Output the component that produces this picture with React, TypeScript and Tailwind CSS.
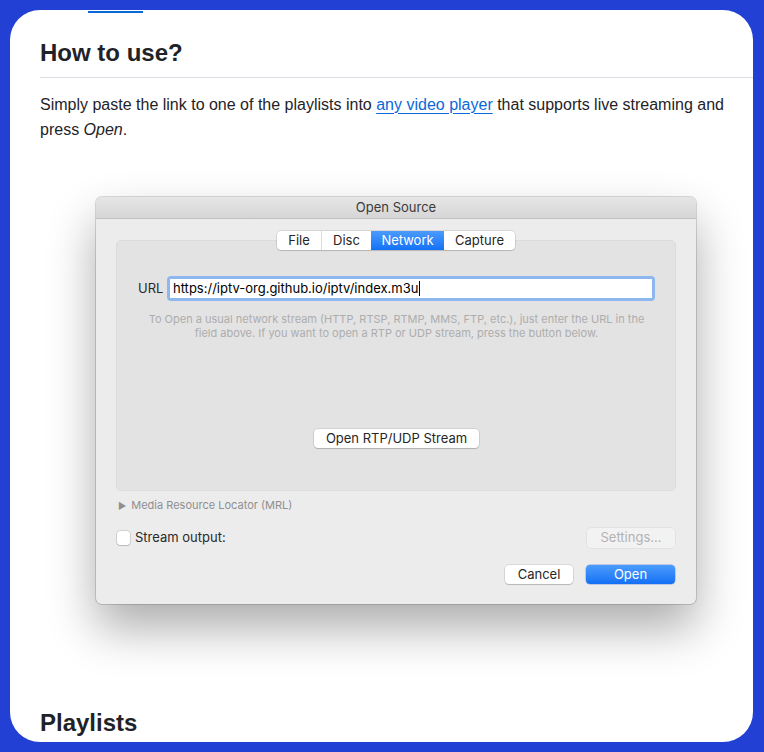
import React from "react";

const mac = { fontFamily: "Inter, 'Noto Sans', sans-serif" } as React.CSSProperties;

function Dialog() {
  return (
    <div
      className="w-[600px] rounded-[6px] bg-[#ececec] shadow-[0_24px_48px_rgba(0,0,0,0.33),0_0_0_1px_rgba(0,0,0,0.14)] overflow-hidden"
      style={mac}
    >
      {/* title bar */}
      <div className="h-[22px] bg-gradient-to-b from-[#e6e6e6] to-[#d6d6d6] border-b border-[#c2c2c2] flex items-center justify-center text-[13px] text-[#3a3a3a] leading-none">
        Open Source
      </div>
      <div className="px-[20px] pt-[12px] pb-[20px]">
        {/* tabs */}
        <div className="relative z-10 flex justify-center">
          <div className="flex h-[19px] rounded-[4px] bg-white shadow-[0_0_0_0.5px_rgba(0,0,0,0.18),0_1px_1px_rgba(0,0,0,0.12)] text-[13px] text-[#262626] leading-none overflow-hidden">
            <div className="w-[45px] flex items-center justify-center border-r border-[#dcdcdc]">File</div>
            <div className="w-[49px] flex items-center justify-center">Disc</div>
            <div className="w-[73px] flex items-center justify-center bg-gradient-to-b from-[#4a9bfc] to-[#1271f6] text-white">Network</div>
            <div className="w-[71px] flex items-center justify-center">Capture</div>
          </div>
        </div>
        {/* group box */}
        <div className="-mt-[10px] h-[251px] rounded-[5px] bg-[#e3e3e3] border border-[#dcdcdc] pt-[35px] pl-[21px] pr-[20px] flex flex-col">
          <div className="flex items-center">
            <div className="w-[31px] text-[13px] text-[#2a2a2a] leading-none">URL</div>
            <div className="flex-1 h-[25px] rounded-[4px] bg-[#8db8ef] p-[3px] ml-[-2px]">
              <div className="h-full bg-white flex items-center pl-[3px] text-[13px] text-black leading-none">
                https://iptv-org.github.io/iptv/index.m3u
                <span className="inline-block w-px h-[15px] bg-black ml-px" />
              </div>
            </div>
          </div>
          <div className="mt-[11px] text-center text-[11px] leading-[14px] text-[#adadad]">
            To Open a usual network stream (HTTP, RTSP, RTMP, MMS, FTP, etc.), just enter the URL in the
            <br />
            field above. If you want to open a RTP or UDP stream, press the button below.
          </div>
          <div className="mt-[89px] flex justify-center">
            <div className="w-[165px] h-[19px] rounded-[4px] bg-white shadow-[0_0_0_0.5px_rgba(0,0,0,0.16),0_1px_1px_rgba(0,0,0,0.16)] flex items-center justify-center text-[13px] text-[#262626] leading-none">
              Open RTP/UDP Stream
            </div>
          </div>
        </div>
        {/* MRL */}
        <div className="mt-[8px] h-[14px] flex items-center text-[11px] text-[#8f8f8f] leading-none pl-[2px]">
          <span className="text-[9px] mr-[5px]">▶</span>
          Media Resource Locator (MRL)
        </div>
        {/* stream output */}
        <div className="mt-[15px] h-[20px] flex items-center justify-between pl-[1px] pr-[1px]">
          <div className="flex items-center">
            <div className="w-[13px] h-[14px] rounded-[3px] bg-white shadow-[0_0_0_0.5px_rgba(0,0,0,0.22),0_1px_1px_rgba(0,0,0,0.12)]" />
            <span className="ml-[5px] text-[13px] text-[#2a2a2a] leading-none">Stream output:</span>
          </div>
          <div className="w-[88px] h-[20px] rounded-[4px] bg-[#f2f2f2] shadow-[0_0_0_0.5px_rgba(0,0,0,0.08)] flex items-center justify-center text-[13px] text-[#b3b3b3] leading-none">
            Settings...
          </div>
        </div>
        {/* buttons */}
        <div className="mt-[17px] flex justify-end gap-[13px] pr-[1px]">
          <div className="w-[68px] h-[19px] rounded-[4px] bg-white shadow-[0_0_0_0.5px_rgba(0,0,0,0.16),0_1px_1px_rgba(0,0,0,0.16)] flex items-center justify-center text-[13px] text-[#262626] leading-none">
            Cancel
          </div>
          <div className="w-[89px] h-[19px] rounded-[4px] bg-gradient-to-b from-[#4b9cfc] to-[#1270f5] shadow-[0_0_0_0.5px_rgba(0,60,200,0.4)] flex items-center justify-center text-[13px] text-white leading-none">
            Open
          </div>
        </div>
      </div>
    </div>
  );
}

export default function App() {
  return (
    <div className="w-[764px] h-[752px] bg-[#2340d4] p-[10px] pr-[11px]">
      <div
        className="h-[732px] bg-white rounded-[30px] overflow-hidden pl-[30px]"
        style={{ fontFamily: "'Liberation Sans', Arial, sans-serif" }}
      >
        <div className="ml-[48px] mt-[1px] w-[55px] h-[1.5px] bg-[#0969da]" />
        <h2 className="mt-[25px] text-[24px] font-bold leading-[30px] text-[#1f2328] pb-[9px] border-b border-[#d8dee4]">
          How to use?
        </h2>
        <p className="mt-[14px] text-[16px] leading-[25px] text-[#1f2328] pr-[26px]">
          Simply paste the link to one of the playlists into{" "}
          <a className="text-[#0969da] underline underline-offset-[3px] decoration-1">any video player</a> that supports
          live streaming and press <em>Open</em>.
        </p>
        <div className="mt-[55px] ml-[56px]">
          <Dialog />
        </div>
        <h2 className="mt-[104px] text-[24px] font-bold leading-[30px] text-[#1f2328]">Playlists</h2>
      </div>
    </div>
  );
}
